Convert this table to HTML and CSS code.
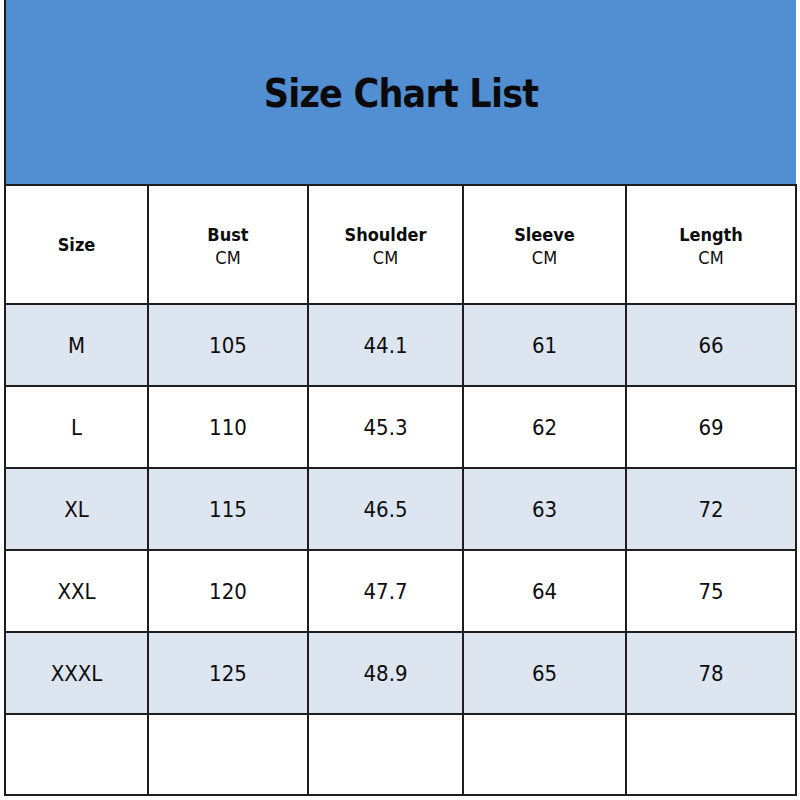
FILE: index.html
```html
<!DOCTYPE html>
<html>
<head>
<meta charset="utf-8">
<link rel="stylesheet" href="styles.css">
</head>
<body>
<div class="chart">
  <div class="banner"><h1 class="title">Size Chart List</h1></div>
  <div class="table">
    <div class="cell head single"><b>Size</b></div>
    <div class="cell head"><b>Bust</b><span>CM</span></div>
    <div class="cell head"><b>Shoulder</b><span>CM</span></div>
    <div class="cell head"><b>Sleeve</b><span>CM</span></div>
    <div class="cell head"><b>Length</b><span>CM</span></div>

    <div class="cell alt">M</div><div class="cell alt">105</div><div class="cell alt">44.1</div><div class="cell alt">61</div><div class="cell alt">66</div>
    <div class="cell">L</div><div class="cell">110</div><div class="cell">45.3</div><div class="cell">62</div><div class="cell">69</div>
    <div class="cell alt">XL</div><div class="cell alt">115</div><div class="cell alt">46.5</div><div class="cell alt">63</div><div class="cell alt">72</div>
    <div class="cell">XXL</div><div class="cell">120</div><div class="cell">47.7</div><div class="cell">64</div><div class="cell">75</div>
    <div class="cell alt">XXXL</div><div class="cell alt">125</div><div class="cell alt">48.9</div><div class="cell alt">65</div><div class="cell alt">78</div>
    <div class="cell"></div><div class="cell"></div><div class="cell"></div><div class="cell"></div><div class="cell"></div>
  </div>
</div>
</body>
</html>
```

FILE: styles.css
```css
html, body {
  margin: 0;
  padding: 0;
  background: #ffffff;
}

body {
  font-family: "DejaVu Sans Condensed", "DejaVu Sans", sans-serif;
  color: #111111;
}

.chart {
  margin-left: 4px;
  width: 793px;
}

.banner {
  height: 184px;
  width: 790px;
  background: #528ed2;
  border-left: 2px solid #1e1e1e;
  display: flex;
  align-items: center;
  justify-content: center;
}

.title {
  margin: 0;
  padding-top: 2px;
  font-size: 39px;
  font-weight: bold;
  color: #0a0a0a;
  letter-spacing: -0.8px;
}

.table {
  display: grid;
  grid-template-columns: 141px 158px 153px 161px 168px;
  grid-template-rows: 117px 80px 80px 80px 80px 80px 79px;
  gap: 2px;
  padding: 2px;
  background: #1e1e1e;
}

.cell {
  background: #ffffff;
  display: flex;
  flex-direction: column;
  align-items: center;
  justify-content: center;
  font-size: 22px;
  color: #0d0d0d;
}

.cell.alt {
  background: #dce5f0;
}

.cell.head {
  font-size: 18px;
  line-height: 23px;
  padding-top: 3px;
}

.cell.head.single {
  padding-top: 0;
}

.cell.head b {
  font-weight: bold;
}

.cell.head span {
  font-weight: normal;
}
```
